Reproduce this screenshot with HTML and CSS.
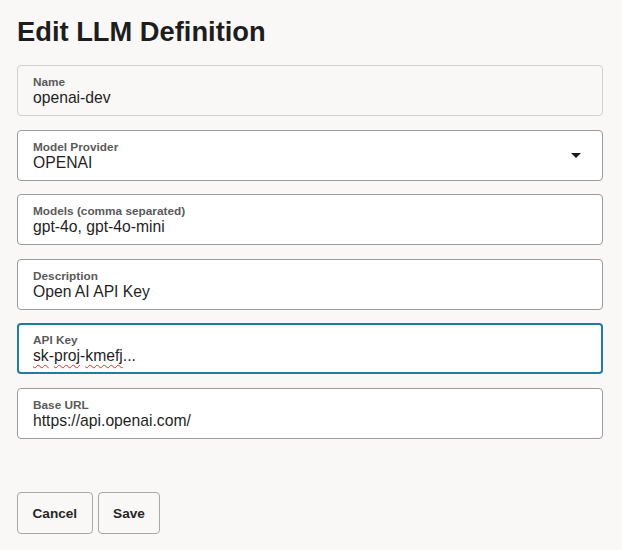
FILE: index.html
```html
<!DOCTYPE html>
<html lang="en">
<head>
<meta charset="utf-8">
<title>Edit LLM Definition</title>
<link rel="stylesheet" href="styles.css">
</head>
<body>
<main class="page">
  <h1 class="title">Edit LLM Definition</h1>
  <form class="form">
    <div class="field field-disabled">
      <span class="label">Name</span>
      <span class="value">openai-dev</span>
    </div>
    <div class="field field-select">
      <div class="field-text">
        <span class="label">Model Provider</span>
        <span class="value">OPENAI</span>
      </div>
      <svg class="caret" width="10" height="5" viewBox="0 0 10 5"><path d="M0 0H10L5 5Z" fill="#1a1a1a"/></svg>
    </div>
    <div class="field">
      <span class="label">Models (comma separated)</span>
      <span class="value">gpt-4o, gpt-4o-mini</span>
    </div>
    <div class="field">
      <span class="label">Description</span>
      <span class="value">Open AI API Key</span>
    </div>
    <div class="field field-focus">
      <span class="label">API Key</span>
      <span class="value"><span class="spell">sk</span>-<span class="spell">proj</span>-<span class="spell">kmefj</span>...</span>
    </div>
    <div class="field">
      <span class="label">Base URL</span>
      <span class="value">https://api.openai.com/</span>
    </div>
  </form>
  <div class="actions">
    <button class="btn" type="button">Cancel</button>
    <button class="btn" type="button">Save</button>
  </div>
</main>
</body>
</html>
```

FILE: styles.css
```css
html, body {
  margin: 0;
  padding: 0;
  background: #f9f8f6;
}
body {
  font-family: "Liberation Sans", Arial, sans-serif;
  color: #1c1c1c;
}
.page {
  padding: 14px 19px 0 17px;
}
.title {
  margin: 0 0 15px 0;
  font-size: 27.3px;
  line-height: 36px;
  font-weight: 700;
  color: #1d1d1d;
}
.form {
  display: flex;
  flex-direction: column;
  gap: 13.6px;
}
.field {
  box-sizing: border-box;
  height: 51px;
  border: 1px solid #9c9c9c;
  border-radius: 4px;
  background: #ffffff;
  padding: 9px 15px 0 15px;
  display: flex;
  flex-direction: column;
}
.field-disabled {
  background: #f9f8f6;
  border-color: #d2d1cf;
}
.field-focus {
  border: 2px solid #227ba2;
  padding: 8px 14px 0 14px;
}
.field-select {
  flex-direction: row;
  align-items: center;
  justify-content: space-between;
  padding-top: 1px;
  padding-right: 21px;
}
.field-text {
  display: flex;
  flex-direction: column;
}
.label {
  font-size: 11.8px;
  line-height: 14px;
  font-weight: 700;
  color: #5a5a5a;
}
.value {
  font-size: 15.7px;
  line-height: 18px;
  color: #1f1f1f;
}
.spell {
  text-decoration: underline wavy #d93025;
  text-decoration-thickness: 1px;
  text-underline-offset: 3px;
}
.caret {
  display: block;
}
.actions {
  display: flex;
  gap: 5px;
  margin-top: 53px;
}
.btn {
  box-sizing: border-box;
  height: 42px;
  padding: 0 14.5px;
  border: 1px solid #a8a8a8;
  border-radius: 4px;
  background: #f9f8f6;
  font-family: "Liberation Sans", Arial, sans-serif;
  font-size: 13.6px;
  font-weight: 700;
  line-height: 42px;
  color: #262626;
}
```
